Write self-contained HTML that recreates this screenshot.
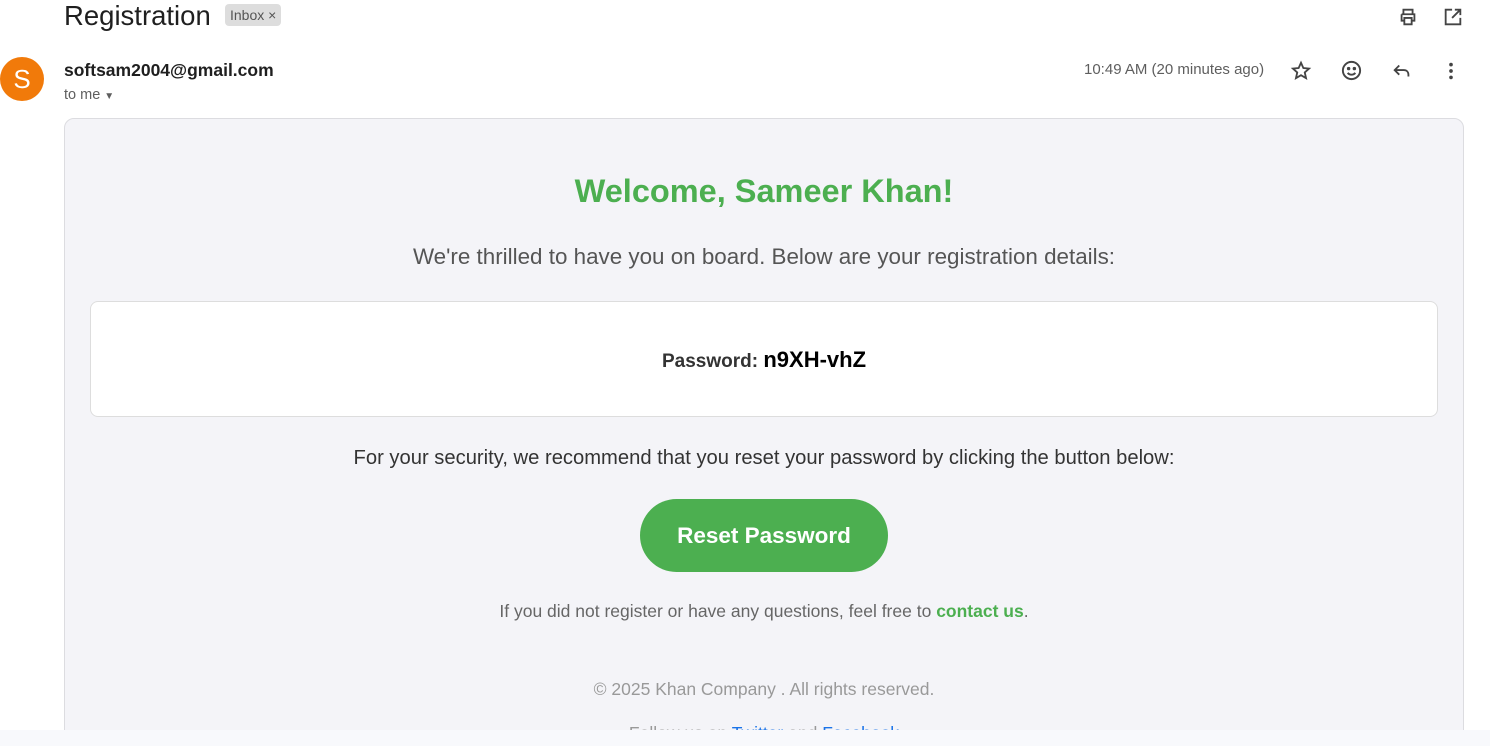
<!DOCTYPE html>
<html><head><meta charset="utf-8"><style>
*{margin:0;padding:0;box-sizing:border-box}
html,body{width:1490px;height:746px;overflow:hidden}
body{background:#fff;font-family:"Liberation Sans",Arial,sans-serif;position:relative}
.abs{position:absolute}
.card{position:absolute;left:64px;top:118px;width:1400px;height:640px;background:#f4f4f8;border:1px solid #dcdce0;border-radius:10px;text-align:center}
.c{position:absolute;left:0;right:0;text-align:center}
</style></head><body>
<div class="abs" style="left:64px;top:0;font-size:27.5px;color:#1f1f1f;line-height:32px">Registration</div>
<div class="abs" style="left:225px;top:4px;height:22px;padding:0 5px;background:#ddd;border-radius:4px;font-size:14px;color:#555;line-height:22px">Inbox ×</div>
<svg class="abs" style="left:1397px;top:6px" width="22" height="22" viewBox="0 0 24 24" fill="none" stroke="#444" stroke-width="2"><path d="M7 8V4h10v4M5 9h14v7h-3M8 16H5V9M8 13h8v7H8z"/></svg>
<svg class="abs" style="left:1442px;top:6px" width="22" height="22" viewBox="0 0 24 24" fill="none" stroke="#444" stroke-width="2"><path d="M11 4H4v16h16v-7M14 4h6v6M20 4l-9 9"/></svg>
<div class="abs" style="left:0;top:57px;width:44px;height:44px;border-radius:50%;background:#f17a0a;color:#fff;font-size:26px;line-height:44px;text-align:center">S</div>
<div class="abs" style="left:64px;top:60px;font-size:17.5px;font-weight:bold;color:#1f1f1f">softsam2004@gmail.com</div>
<div class="abs" style="left:64px;top:87px;font-size:14.5px;color:#5e5e5e">to me <span style="font-size:10px">▼</span></div>
<div class="abs" style="left:1084px;top:61px;font-size:15px;color:#5e5e5e">10:49 AM (20 minutes ago)</div>
<svg class="abs" style="left:1290px;top:60px" width="22" height="22" viewBox="0 0 24 24" fill="none" stroke="#444" stroke-width="2"><path d="M12 3l2.6 5.8 6.2.6-4.7 4.2 1.4 6.2L12 16.6 6.5 19.8l1.4-6.2-4.7-4.2 6.2-.6z"/></svg>
<svg class="abs" style="left:1340px;top:59px" width="23" height="23" viewBox="0 0 24 24" fill="none" stroke="#444" stroke-width="2"><circle cx="12" cy="12" r="9"/><path d="M8 14.5c2 2.5 6 2.5 8 0"/><circle cx="9" cy="10" r=".8" fill="#444"/><circle cx="15" cy="10" r=".8" fill="#444"/></svg>
<svg class="abs" style="left:1391px;top:60px" width="22" height="22" viewBox="0 0 24 24" fill="none" stroke="#444" stroke-width="2"><path d="M9 6L4 11l5 5M4 11h10c3 0 5 2 5 5v2"/></svg>
<svg class="abs" style="left:1440px;top:60px" width="22" height="22" viewBox="0 0 24 24" fill="#444"><circle cx="12" cy="5" r="2"/><circle cx="12" cy="12" r="2"/><circle cx="12" cy="19" r="2"/></svg>
<div class="card">
<div class="c" style="top:54px;font-size:32.5px;font-weight:bold;color:#4caf50">Welcome, Sameer Khan!</div>
<div class="c" style="top:125px;font-size:22.4px;color:#555">We're thrilled to have you on board. Below are your registration details:</div>
<div class="abs" style="left:25px;top:182px;width:1348px;height:116px;background:#fff;border:1px solid #ddd;border-radius:8px"></div>
<div class="c" style="top:228px;font-size:19px;font-weight:bold;color:#333">Password: <span style="font-size:22px;color:#000">n9XH-vhZ</span></div>
<div class="c" style="top:328px;font-size:20.2px;color:#333">For your security, we recommend that you reset your password by clicking the button below:</div>
<div class="abs" style="left:575px;top:380px;width:248px;height:73px;border-radius:37px;background:#4caf50;color:#fff;font-size:22.5px;font-weight:bold;line-height:73px">Reset Password</div>
<div class="c" style="top:482px;font-size:17.5px;color:#666">If you did not register or have any questions, feel free to <b style="color:#4caf50">contact us</b>.</div>
<div class="c" style="top:560px;font-size:17.5px;color:#999">© 2025 Khan Company . All rights reserved.</div>
<div class="c" style="top:604px;font-size:17.5px;color:#999">Follow us on <span style="color:#1a73e8">Twitter</span> and <span style="color:#1a73e8">Facebook</span></div>
</div>
<div class="abs" style="left:0;top:730px;width:1490px;height:16px;background:#f8f9fc"></div>
</body></html>
